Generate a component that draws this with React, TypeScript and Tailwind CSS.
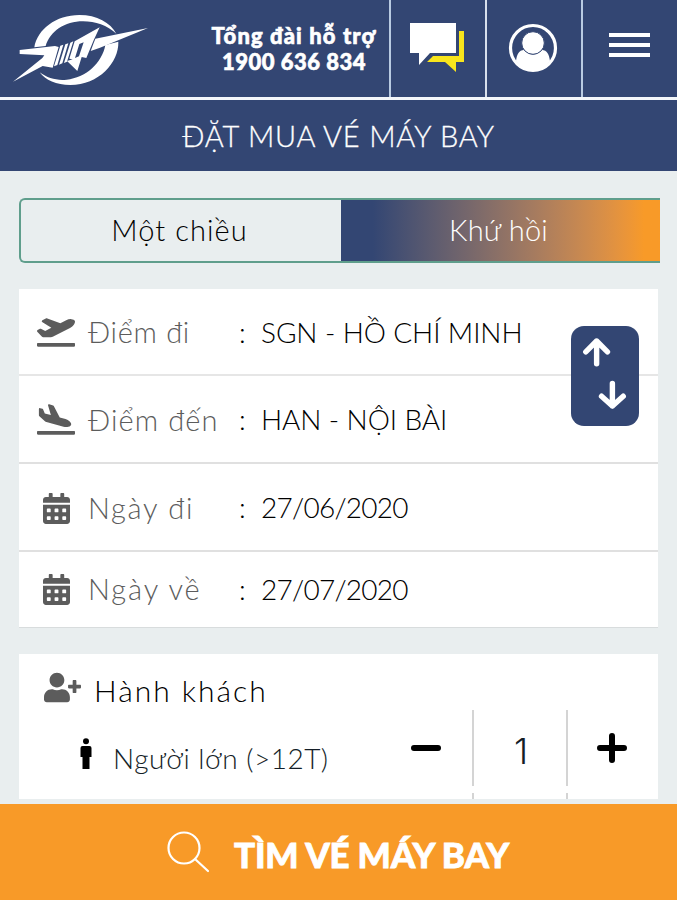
import { FC, ReactNode } from "react";
import { FaCalendarAlt, FaPlaneArrival, FaPlaneDeparture, FaUserPlus } from "react-icons/fa";

interface FieldData {
    label: string;
    value: string;
    icon: ReactNode;
    row: string;
    labelSpacing: string;
    valueSpacing: string;
}

const fields: FieldData[] = [
    {
        label: "Điểm đi",
        value: "SGN - HỒ CHÍ MINH",
        icon: <FaPlaneDeparture className="w-[38px] h-[31px]" />,
        row: "h-[87px] border-b-2 border-b-[#e6e6e6]",
        labelSpacing: "tracking-[0.7px]",
        valueSpacing: "tracking-[-0.1px]",
    },
    {
        label: "Điểm đến",
        value: "HAN - NỘI BÀI",
        icon: <FaPlaneArrival className="w-[38px] h-[31px]" />,
        row: "h-[88px] border-b-2 border-b-[#e0e0e0]",
        labelSpacing: "tracking-[1.1px]",
        valueSpacing: "tracking-[-0.1px]",
    },
    {
        label: "Ngày đi",
        value: "27/06/2020",
        icon: <FaCalendarAlt className="w-[27px] h-[31px] mt-[2px]" />,
        row: "h-[88px] border-b-2 border-b-[#e0e0e0]",
        labelSpacing: "tracking-[1.7px]",
        valueSpacing: "tracking-[-0.75px]",
    },
    {
        label: "Ngày về",
        value: "27/07/2020",
        icon: <FaCalendarAlt className="w-[27px] h-[31px] mt-[2px]" />,
        row: "h-[75px] pb-[2px]",
        labelSpacing: "tracking-[1.9px]",
        valueSpacing: "tracking-[-0.75px]",
    },
];

const Logo: FC = () => (
    <svg viewBox="0 0 600 330" className="w-[200px] h-[97px] shrink-0" preserveAspectRatio="xMinYMin slice" fill="#fff">
        <path d="M103 142C112 88 168 45 238 45C291 45 331 68 349 101C322 76 286 64 249 64C194 64 150 94 137 138Z" />
        <path d="M355 125C357 187 296 255 211 255C169 255 136 241 119 217C143 235 170 242 200 239C257 233 306 190 316 135Z" />
        <path d="M59 150L165 138L176 141L158 203L128 198L39 245L127 174L133 166L59 162Z" />
        <path d="M181 137L190 134L172 195L162 199ZM196 133L205 130L187 190L177 194ZM211 128L220 124L201 185L192 189Z" />
        <path d="M224 124L299 82L281 121L259 174L245 171L232 213L201 183L218 178L208 176ZM238 132L225 174L237 169L251 127Z" fillRule="evenodd" />
        <path d="M286 116L444 84L300 143L272 153Z" />
    </svg>
);

const ChatIcon: FC = () => (
    <svg viewBox="0 0 56 52" className="w-14 h-[52px]">
        <path d="M50 8H55V39H47V49L36 39H18L24 33H50Z" fill="#f8e51c" />
        <path d="M1 0H47V30H21L10 42V30H1Z" fill="#fff" />
    </svg>
);

const AccountIcon: FC = () => (
    <svg viewBox="0 0 50 50" className="w-[50px] h-[50px]">
        <circle cx="25" cy="25" r="22.5" fill="none" stroke="#fff" strokeWidth="3.2" />
        <path d="M8 38C9 31 11 27 16 27C22 33 28 33 34 27C39 27 41 31 42 38C34 50 16 50 8 38Z" fill="#fff" />
        <circle cx="25" cy="20" r="11.3" fill="#fff" stroke="#334673" strokeWidth="1" />
    </svg>
);

const AdultIcon: FC = () => (
    <svg viewBox="0 0 12 32" className="w-3 h-8" fill="#000">
        <circle cx="6" cy="3.2" r="3" />
        <path d="M2.5 8H9.5Q11.5 8 11.5 10V19H9.5V31H2.5V19H0.5V10Q0.5 8 2.5 8Z" />
    </svg>
);

const Header: FC = () => (
    <header className="w-full h-[100px] flex border-b-[3px] border-b-[#f3f6fa] text-white">
        <Logo />
        <div className="w-[189px] flex flex-col items-center pt-[23px] pr-[1px] text-[22px] leading-[26px] font-black whitespace-nowrap [-webkit-text-stroke:0.6px_white]">
            <span className="tracking-[1.1px]">Tổng đài hỗ trợ</span>
            <span className="tracking-[0.5px]">1900 636 834</span>
        </div>
        <div className="w-24 border-l-2 border-l-[#b9cbe2] pl-[18px] pt-[23px]">
            <ChatIcon />
        </div>
        <div className="w-[96px] border-l-2 border-l-[#d8dfec] pl-[21px] pt-[23px]">
            <AccountIcon />
        </div>
        <div className="flex-1 border-l-2 border-l-[#b9cbe2] pl-[26px] pt-[33px] flex flex-col gap-[6px]">
            <span className="w-[41px] h-1 bg-white" />
            <span className="w-[41px] h-1 bg-white" />
            <span className="w-[41px] h-1 bg-white" />
        </div>
    </header>
);

const TripTabs: FC = () => (
    <div className="h-[65px] flex rounded-l-md border-2 border-[#5f9e8c] border-r-0 text-[29px] leading-none">
        <div className="w-[320px] pb-[2px] pr-[3px] flex justify-center items-center text-black tracking-[1.1px]">Một chiều</div>
        <div className="flex-1 pb-[2px] pr-[4px] flex justify-center items-center text-white tracking-[0.2px] bg-linear-to-r from-[#334673] from-10% to-[#f89a28] to-95%">
            Khứ hồi
        </div>
    </div>
);

const Field: FC<{ item: FieldData }> = ({ item }) => (
    <div className={`flex items-center text-[28px] leading-none whitespace-nowrap ${item.row}`}>
        <div className="w-[69px] pl-[5px] flex justify-center items-center text-[#5c5c5c]">{item.icon}</div>
        <div className={`w-[151px] text-[29px] text-[#5c5c5c] ${item.labelSpacing}`}>{item.label}</div>
        <div className="w-[22px] text-black">:</div>
        <div className={`text-black ${item.valueSpacing}`}>{item.value}</div>
    </div>
);

const SwapButton: FC = () => (
    <button className="absolute right-[19px] top-[37px] w-[68px] h-[100px] rounded-[13px] bg-[#334673]">
        <svg viewBox="0 0 69 101" className="w-full h-full" fill="none" stroke="#fff" strokeWidth="5.5" strokeLinecap="round" strokeLinejoin="round">
            <path d="M26 38V15M15 26L26 15L37 26" />
            <path d="M42 58V81M31 71L42 81L53 71" />
        </svg>
    </button>
);

const Passengers: FC = () => (
    <section className="h-[145px] bg-white flex flex-col">
        <div className="h-[56px] pt-[18px] pl-[25px] flex items-start text-[30px] leading-[37px] text-black">
            <FaUserPlus className="w-[37px] h-[31px] text-[#5c5c5c]" />
            <span className="ml-[13px] tracking-[2px]">Hành khách</span>
        </div>
        <div className="flex-1 flex">
            <div className="w-[357px] pl-[61px] pt-[28px] flex items-start text-[28px] leading-[40px] text-[#141e27] whitespace-nowrap">
                <AdultIcon />
                <span className="ml-[21px] tracking-[0.5px]">Người lớn (&gt;12T)</span>
            </div>
            <div className="w-[96px] pl-[35px] pt-[35px]">
                <span className="block w-[30px] h-[6px] rounded-sm bg-black" />
            </div>
            <div className="w-24 flex flex-col gap-[7px]">
                <div className="h-[76px] border-x-2 border-x-[#d4d4d4] flex justify-center items-center pt-[6px] pl-[2px] text-[36px] leading-none text-[#141e27] font-['Inter',sans-serif]">1</div>
                <div className="flex-1 border-x-2 border-x-[#d4d4d4]" />
            </div>
            <div className="pl-[29px] pt-[23px]">
                <svg viewBox="0 0 30 30" className="w-[30px] h-[30px]" stroke="#000" strokeWidth="6" strokeLinecap="round">
                    <path d="M15 3V27M3 15H27" />
                </svg>
            </div>
        </div>
    </section>
);

const App: FC = () => {
    return (
        <div className="w-[677px] h-[900px] overflow-hidden flex flex-col bg-[#e9eeef] font-['Lato',sans-serif] font-light">
            <div className="bg-[#334673]">
                <Header />
                <div className="h-[71px] pb-[1px] flex justify-center items-center text-[29px] leading-none text-white">
                    <h1 className="tracking-[0.8px] [-webkit-text-stroke:0.3px_white]">ĐẶT MUA VÉ MÁY BAY</h1>
                </div>
            </div>
            <main className="flex-1 pt-[27px] pl-[19px] pr-[17px] flex flex-col">
                <TripTabs />
                <section className="relative mt-[26px] mr-[2px] h-[339px] bg-white border-b border-b-[#d8dcdd]">
                    {
                        fields.map((item, index) => (
                            <Field key={index} item={item} />
                        ))
                    }
                    <SwapButton />
                </section>
                <div className="mt-[26px] mr-[2px]">
                    <Passengers />
                </div>
            </main>
            <footer className="h-[96px] bg-[#f89a28] flex justify-center items-center text-white">
                <svg viewBox="0 0 42 42" className="w-[42px] h-[42px]" fill="none" stroke="#fff" strokeWidth="2.2" strokeLinecap="round">
                    <circle cx="17" cy="17" r="15.5" />
                    <path d="M28 28L41 40" />
                </svg>
                <span className="ml-[25px] pt-[4px] pr-[1px] text-[35px] leading-none font-black tracking-[-0.2px] [-webkit-text-stroke:0.8px_white]">TÌM VÉ MÁY BAY</span>
            </footer>
        </div>
    );
};

export default App;
